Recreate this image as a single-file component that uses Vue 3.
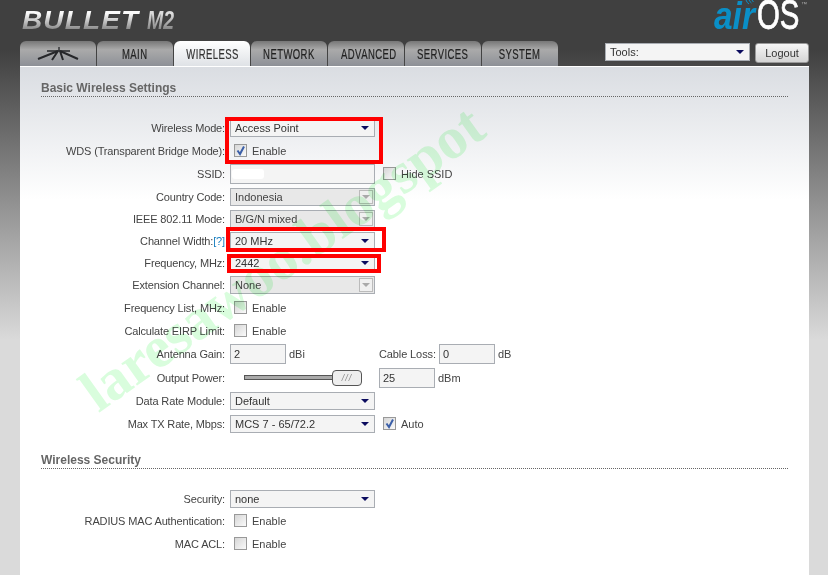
<script setup>
const tabs = ['MAIN', 'WIRELESS', 'NETWORK', 'ADVANCED', 'SERVICES', 'SYSTEM']
</script>

<template>
  <div class="page">
    <header class="head">
      <div class="brand"><span class="bullet">BULLET</span><span class="model">M2</span></div>
      <div class="airos">
        <span class="air">air</span><span class="os">OS</span><span class="tm">™</span>
        <svg class="waves" width="10" height="5" viewBox="0 0 10 5"><path d="M1 0 Q2 3 4 4 M4 0 Q5 2 6.5 3 M7 0 Q7.5 1 8.5 2" /></svg>
      </div>
    </header>
    <nav class="nav">
      <div class="tab icon-tab">
        <svg class="dish" width="42" height="14" viewBox="0 0 42 14">
          <path class="thin" d="M22 0 V4 M10 4 H33" />
          <path d="M21 4 L1 12 M21 4 L15 13 M23 4 L26 13 M23 4 L41 12" />
        </svg>
      </div>
      <div v-for="t in tabs" :key="t" class="tab" :class="{ active: t === 'WIRELESS' }"><span>{{ t }}</span></div>
      <div class="tools">
        <div class="select tools-select"><span>Tools:</span><i class="arrow"></i></div>
        <div class="logout">Logout</div>
      </div>
    </nav>

    <main class="panel">
      <h2 class="title">Basic Wireless Settings</h2>
      <section class="form first">
        <div class="row"><label>Wireless Mode:</label><div class="select"><span>Access Point</span><i class="arrow"></i></div></div>
        <div class="row"><label>WDS (Transparent Bridge Mode):</label><span class="check on"><svg viewBox="0 0 11 11"><path d="M2.5 5.5 L5 9 L9 1.5" /></svg></span><span class="opt">Enable</span></div>
        <div class="row"><label>SSID:</label><div class="input wide"><b class="mask"></b></div><span class="check gap"></span><span class="opt">Hide SSID</span></div>
        <div class="row short"><label>Country Code:</label><div class="select off"><span>Indonesia</span><em><i class="arrow"></i></em></div></div>
        <div class="row short"><label>IEEE 802.11 Mode:</label><div class="select off"><span>B/G/N mixed</span><em><i class="arrow"></i></em></div></div>
        <div class="row short"><label>Channel Width:<a>[?]</a></label><div class="select"><span>20 MHz</span><i class="arrow"></i></div></div>
        <div class="row short"><label>Frequency, MHz:</label><div class="select"><span>2442</span><i class="arrow"></i></div></div>
        <div class="row"><label>Extension Channel:</label><div class="select off"><span>None</span><em><i class="arrow"></i></em></div></div>
        <div class="row"><label>Frequency List, MHz:</label><span class="check"></span><span class="opt">Enable</span></div>
        <div class="row"><label>Calculate EIRP Limit:</label><span class="check"></span><span class="opt">Enable</span></div>
        <div class="row tall"><label>Antenna Gain:</label><div class="input small"><span>2</span></div><span class="unit">dBi</span><label class="inline">Cable Loss:</label><div class="input small"><span>0</span></div><span class="unit">dB</span></div>
        <div class="row"><label>Output Power:</label><div class="slider"><b></b><em>///</em></div><div class="input small"><span>25</span></div><span class="unit">dBm</span></div>
        <div class="row"><label>Data Rate Module:</label><div class="select"><span>Default</span><i class="arrow"></i></div></div>
        <div class="row"><label>Max TX Rate, Mbps:</label><div class="select"><span>MCS 7 - 65/72.2</span><i class="arrow"></i></div><span class="check on gap"><svg viewBox="0 0 11 11"><path d="M2.5 5.5 L5 9 L9 1.5" /></svg></span><span class="opt">Auto</span></div>
      </section>

      <h2 class="title second">Wireless Security</h2>
      <section class="form">
        <div class="row tight"><label>Security:</label><div class="select"><span>none</span><i class="arrow"></i></div></div>
        <div class="row"><label>RADIUS MAC Authentication:</label><span class="check"></span><span class="opt">Enable</span></div>
        <div class="row"><label>MAC ACL:</label><span class="check"></span><span class="opt">Enable</span></div>
      </section>

      <span class="watermark">laresawoo.blogspot</span>
      <i class="mark m1"></i><i class="mark m2"></i><i class="mark m3"></i>
    </main>
  </div>
</template>

<style>
html, body { margin: 0; background: #414141; }
</style>

<style scoped>
.page {
  width: 828px; height: 575px; overflow: hidden; position: relative;
  background: linear-gradient(#404040 0, #404040 50px, #dadada 340px, #dadada 100%);
  font: 11px "Liberation Sans", Arial, sans-serif; color: #444;
}
.head { height: 41px; display: flex; justify-content: space-between; padding: 0 21px 0 22px; box-sizing: border-box; }
.brand { padding-top: 9px; display: flex; align-items: flex-start; height: 32px; box-sizing: border-box; }
.bullet {
  font: italic bold 25px/23px "Liberation Sans", sans-serif; letter-spacing: 1px;
  display: block; width: 106px; margin-right: 19px; white-space: nowrap;
  transform: scaleX(1.12); transform-origin: left center;
  background: linear-gradient(#fafafa 20%, #777 100%); -webkit-background-clip: text; background-clip: text; color: transparent;
}
.model {
  font: italic bold 25px/23px "Liberation Sans", sans-serif; display: block; width: 38px; white-space: nowrap;
  transform: scaleX(.78); transform-origin: left center;
  background: linear-gradient(#ddd 20%, #777 100%); -webkit-background-clip: text; background-clip: text; color: transparent;
}
.airos { position: relative; display: flex; align-items: baseline; height: 30px; width: 93px; }
.air {
  display: block; width: 48px; margin-right: -5px; font: italic bold 38px/30px "Liberation Sans", sans-serif; color: #0a8fc7;
  transform: scaleX(.88); transform-origin: left center; white-space: nowrap;
}
.os {
  display: block; width: 62px; margin-right: -18px; font: 42px/30px "Liberation Sans", sans-serif; color: #fff;
  transform: scaleX(.7); transform-origin: left center; white-space: nowrap; -webkit-text-stroke: .8px #fff;
}
.tm { font-size: 6px; line-height: 8px; color: #aaa; position: absolute; right: 0; top: 0; }
.waves { position: absolute; left: 31px; top: 0; fill: none; stroke: #0a8fc7; stroke-width: 1; }

.nav { height: 25px; display: flex; padding-left: 20px; gap: 1px; align-items: flex-start; }
.tab {
  width: 76px; height: 25px; box-sizing: border-box; border-radius: 6px 6px 0 0; overflow: hidden;
  background: linear-gradient(#777 0, #aaa 35%, #8d9097 100%);
  text-align: center; color: #222;
}
.tab span {
  display: inline-block; font: 14px/27px "Liberation Sans", sans-serif; letter-spacing: .6px; white-space: nowrap;
  transform: scaleX(.68); -webkit-text-stroke: .2px currentColor;
}
.tab.icon-tab { display: flex; align-items: center; justify-content: center; }
.dish { fill: none; stroke: #26272a; stroke-width: 2; }
.dish .thin { stroke-width: 1.3; }
.tab.active { background: linear-gradient(#fff, #dfe2e6); color: #333; }
.tools { margin-left: auto; display: flex; gap: 5px; padding-right: 19px; padding-top: 2px; }
.tools-select { width: 145px; height: 18px; }
.logout {
  width: 54px; height: 20px; box-sizing: border-box; border: 1px solid #999; border-radius: 3px;
  background: linear-gradient(#f6f6f6, #d4d4d4); text-align: center; line-height: 18px; color: #333; font-size: 11px;
}

.panel {
  position: relative; box-sizing: border-box; margin: 0 19px 0 20px; height: 509px; overflow: hidden;
  border-top: 1px solid #fff; padding: 14px 21px 0;
  background: linear-gradient(#dadde2 0, #fff 133px);
}
.title {
  margin: 0; font: bold 12px/15px "Liberation Sans", sans-serif; color: #666;
  height: 15px; border-bottom: 1px dotted #666;
}
.title.second { margin-top: 18px; }
.form { margin-left: -21px; padding-top: 18px; }
.form.first { padding-top: 19px; }
.row { height: 23px; display: flex; align-items: center; }
.row.short { height: 22px; padding-top: 2px; box-sizing: border-box; }
.row.tall { height: 24px; }
.row.tight { margin-bottom: -1px; }
.row > label:first-child { width: 205px; text-align: right; margin-right: 5px; white-space: nowrap; flex: none; letter-spacing: -.15px; }
.row a { color: #1a7fc0; }
.select {
  position: relative; width: 145px; height: 18px; box-sizing: border-box; border: 1px solid #a9adb3; background: #f4f4f4;
  line-height: 16px; padding-left: 4px; color: #333; flex: none;
}
.select.off { background: #e8e8e8; color: #444; }
.arrow { position: absolute; right: 5px; top: 6px; width: 0; height: 0; border: 4px solid transparent; border-top-color: #0b0b5e; border-bottom: 0; }
.select em { position: absolute; right: 1px; top: 1px; width: 14px; height: 14px; border: 1px solid #bbb; background: #f0f0f0; box-sizing: border-box; }
.select em .arrow { right: 2px; top: 4px; border-top-color: #aaa; }
.input {
  box-sizing: border-box; height: 20px; border: 1px solid #a9adb3; background: #f4f4f4; line-height: 18px; padding-left: 3px; color: #333; flex: none;
}
.input.wide { width: 145px; display: flex; align-items: center; padding-left: 1px; }
.input.small { width: 56px; }
.mask { display: block; width: 32px; height: 10px; background: #fff; border-radius: 3px; }
.check {
  width: 13px; height: 13px; box-sizing: border-box; border: 1px solid #999; flex: none; margin-left: 4px;
  background: linear-gradient(135deg, #d6d6d6, #fafafa); display: block;
}
.check.gap { margin-left: 8px; }
.check svg { display: block; width: 11px; height: 11px; fill: none; stroke: #3b5fa8; stroke-width: 2; }
.opt { margin-left: 5px; color: #444; }
.unit { margin-left: 3px; color: #444; }
.inline { margin-left: 74px; margin-right: 3px; letter-spacing: -.1px; }
.slider { position: relative; width: 118px; height: 16px; margin: 0 17px 0 14px; flex: none; }
.slider b { position: absolute; left: 0; right: 28px; top: 5px; height: 5px; background: #aaa; border: 1px solid #555; box-sizing: border-box; }
.slider em {
  position: absolute; right: 0; top: 0; width: 30px; height: 16px; box-sizing: border-box; border: 1px solid #555; border-radius: 4px;
  background: #eee; font: italic 9px/14px "Liberation Sans", sans-serif; color: #888; text-align: center; letter-spacing: 1px;
}
.watermark {
  position: absolute; left: 79px; top: 295px; transform: rotate(-35.5deg); transform-origin: 0 52px;
  font: bold 59px/62px "Liberation Serif", serif; color: #d9fddd; white-space: nowrap;
  mix-blend-mode: multiply; pointer-events: none;
}
.mark { position: absolute; border: 4px solid #f00; box-sizing: border-box; }
.m1 { left: 205px; top: 50px; width: 158px; height: 47px; }
.m2 { left: 206px; top: 160px; width: 160px; height: 25px; }
.m3 { left: 207px; top: 187px; width: 154px; height: 19px; }
</style>
